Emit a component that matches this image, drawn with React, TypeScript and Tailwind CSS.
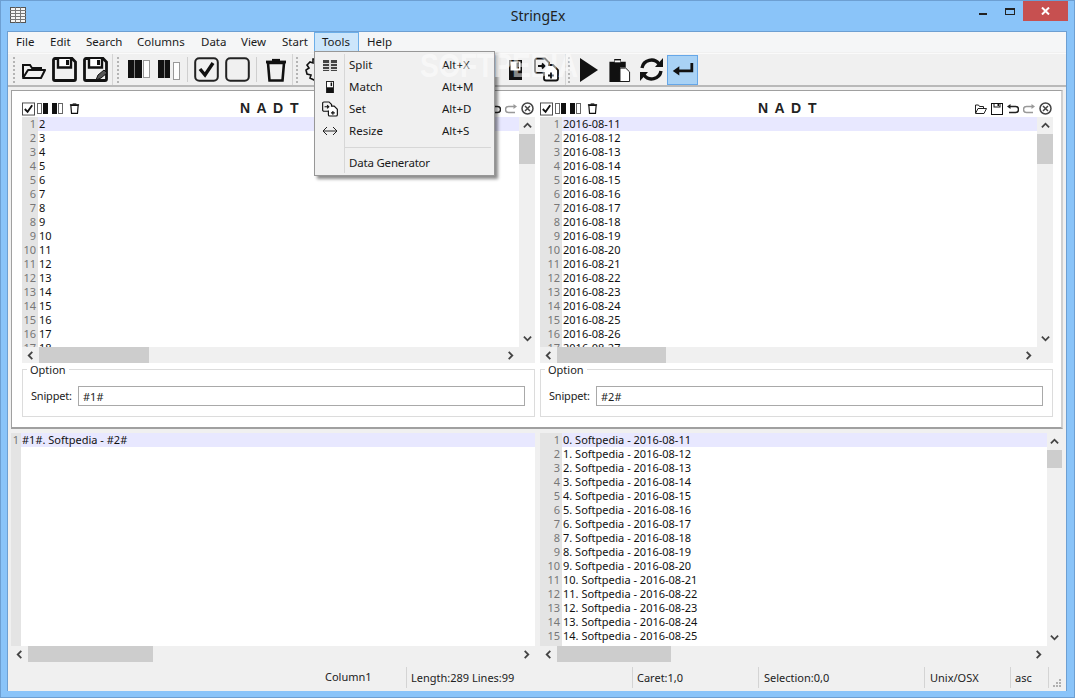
import type { ReactNode } from "react";

const uiFont = "font-['Noto_Sans',sans-serif]";

const menus: [string, string][] = [
  ["File", "w-[34px]"],
  ["Edit", "w-[36px]"],
  ["Search", "w-[51px]"],
  ["Columns", "w-[64px]"],
  ["Data", "w-[40px]"],
  ["View", "w-[41px]"],
  ["Start", "w-[40px]"],
  ["Tools", "w-[45px]"],
  ["Help", "w-[44px]"],
];

function pad(n: number) {
  return n < 10 ? "0" + n : "" + n;
}

function dateAt(i: number) {
  return i < 21 ? `2016-08-${i + 11}` : `2016-09-${pad(i - 20)}`;
}

const numberLines = Array.from({ length: 18 }, (_, i) => String(i + 2));
const dateLines = Array.from({ length: 18 }, (_, i) => dateAt(i));
const resultLines = Array.from({ length: 16 }, (_, i) => `${i}. Softpedia - ${dateAt(i)}`);

function Grip({ className = "" }: { className?: string }) {
  return <div className={`w-[2px] h-[26px] border-l-2 border-dotted border-[#b4b4b4] ${className}`} />;
}

function Sep({ className = "" }: { className?: string }) {
  return <div className={`w-px h-[25px] bg-[#cfcfcf] ${className}`} />;
}

function Divider({ className = "" }: { className?: string }) {
  return <div className={`w-px h-[31px] bg-[#d4d4d4] ${className}`} />;
}

function OpenIcon() {
  return (
    <svg width="26" height="24" viewBox="0 0 26 24" fill="none" stroke="#111" strokeWidth="2">
      <path d="M3 19V7h7l2 3h9v3" />
      <path d="M3 20h18l4-8H8L3 20z" strokeLinejoin="round" />
    </svg>
  );
}

function SaveIcon({ pen }: { pen?: boolean }) {
  return (
    <svg width="25" height="25" viewBox="0 0 25 25" fill="none">
      <path d="M3 1.500h17l3.500 3.500v17a1.500 1.500 0 0 1-1.500 1.500H3A1.500 1.500 0 0 1 1.500 22V3A1.500 1.500 0 0 1 3 1.500z" stroke="#111" strokeWidth="2.800" />
      <path d="M6 2v8.500h13V2" fill="#fff" stroke="#111" strokeWidth="2.400" />
      <rect x="14" y="3" width="3" height="5" fill="#111" />
      {pen && <path d="M13 23l2-5 6-5 3 3-6 5z" fill="#555" stroke="#111" strokeWidth="1" />}
    </svg>
  );
}

function ColumnsIcon({ second }: { second?: boolean }) {
  return (
    <svg width="22" height="20" viewBox="0 0 22 20">
      {second ? (
        <>
          <rect x="0" y="0" width="6" height="18" fill="#111" />
          <rect x="6.500" y="0" width="5.500" height="18" fill="#111" />
          <rect x="15.500" y="2.500" width="6" height="17" fill="#fff" stroke="#999" />
        </>
      ) : (
        <>
          <rect x="0" y="0" width="6.500" height="18" fill="#111" />
          <rect x="7" y="0" width="7" height="18" fill="#111" />
          <rect x="15.500" y="0.500" width="6" height="17" fill="#fff" stroke="#999" />
        </>
      )}
    </svg>
  );
}

function BoxIcon({ checked }: { checked?: boolean }) {
  return (
    <svg width="25" height="25" viewBox="0 0 25 25" fill="none">
      <rect x="1.200" y="1.200" width="22.600" height="22.600" rx="4" stroke="#222" strokeWidth="2" />
      {checked && <path d="M6 12l5 6 8-12" stroke="#111" strokeWidth="3.400" />}
    </svg>
  );
}

function TrashIcon({ size = 24 }: { size?: number }) {
  return (
    <svg width={size} height={size} viewBox="0 0 24 24" fill="none" stroke="#111">
      <path d="M4 5l1.500 17.500h13L20 5z" strokeWidth="2.600" />
      <path d="M2 4h20" strokeWidth="2.800" />
      <path d="M8 2h8" strokeWidth="2.200" />
    </svg>
  );
}

function GearIcon() {
  return (
    <svg width="24" height="26" viewBox="0 0 24 26" fill="none" stroke="#111" strokeWidth="1.600">
      <path d="M9 2h5l1 3 3-1 3 4-2 3 3 2-1 5-3 0 0 3-4 2-2-2-2 2-4-2 1-3-4-1-1-4 3-2-2-3 3-3 3 1z" />
    </svg>
  );
}

function MatchIcon({ w, h }: { w: number; h: number }) {
  return (
    <svg width={w} height={h} viewBox="0 0 13 20">
      <rect x="0" y="0" width="13" height="20" fill="#111" />
      <rect x="1.500" y="1.500" width="10" height="9" fill="#fff" />
      <rect x="7.500" y="2.500" width="2.500" height="6" fill="#111" />
    </svg>
  );
}

function SetIcon({ size = 25 }: { size?: number }) {
  return (
    <svg width={size} height={size} viewBox="0 0 25 25" fill="none" stroke="#111" strokeWidth="1.800">
      <path d="M3 1.500h8l4 4V16H3a2 2 0 0 1-2-2V3.500a2 2 0 0 1 2-2z" />
      <path d="M14 8h5l5 5v8.500a2 2 0 0 1-2 2H12a2 2 0 0 1-2-2V15" fill="#fff" />
      <path d="M4 9h6M8 6.500l2.500 2.500L8 11.500M14 18.500h6M17 15.500v6" />
    </svg>
  );
}

function PlayIcon() {
  return (
    <svg width="18" height="24" viewBox="0 0 18 24">
      <path d="M0 0l18 12L0 24z" fill="#111" />
    </svg>
  );
}

function PasteIcon() {
  return (
    <svg width="23" height="24" viewBox="0 0 23 25">
      <path d="M1 4h5V1h7v3h5v6h-6v15H1z" fill="#111" />
      <rect x="6.500" y="2.500" width="6" height="2" fill="#fff" />
      <path d="M12 10.500h6l4 4V24.500H12z" fill="#fff" stroke="#111" />
    </svg>
  );
}

function RefreshIcon() {
  return (
    <svg width="25" height="25" viewBox="0 0 25 25" fill="none" stroke="#111" strokeWidth="3.400">
      <path d="M3 11a9.500 9.500 0 0 1 17-4" />
      <path d="M22 14a9.500 9.500 0 0 1-17 4" />
      <path d="M24 1v9h-8z" fill="#111" stroke="none" />
      <path d="M1 24v-9h8z" fill="#111" stroke="none" />
    </svg>
  );
}

function EnterIcon() {
  return (
    <svg width="22" height="13" viewBox="0 0 22 14" fill="none">
      <path d="M20.500 0v8.500H5" stroke="#111" strokeWidth="3" />
      <path d="M0 8.500l7-5v10z" fill="#111" />
    </svg>
  );
}

function SplitIcon() {
  return (
    <svg width="14" height="11" viewBox="0 0 14 11">
      <rect width="14" height="11" fill="#444" />
      <path d="M0 3.500h14M0 6.500h14M0 9.500h14M6.500 0v11M7.500 0v11" stroke="#ddd" />
    </svg>
  );
}

function SmallSplit({ right }: { right?: boolean }) {
  return (
    <svg width="11" height="11" viewBox="0 0 11 11">
      {right ? (
        <>
          <rect x="0" y="0" width="5" height="11" fill="#111" />
          <rect x="6.500" y="0.500" width="4" height="10" fill="#fff" stroke="#666" />
        </>
      ) : (
        <>
          <rect x="0.500" y="0.500" width="4" height="10" fill="#fff" stroke="#666" />
          <rect x="6" y="0" width="5" height="11" fill="#111" />
        </>
      )}
    </svg>
  );
}

function SmallCheck() {
  return (
    <svg width="14" height="14" viewBox="0 0 14 14" fill="none">
      <rect x="0.500" y="0.500" width="13" height="13" fill="#fff" stroke="#444" />
      <path d="M3 7l3 3 5-7" stroke="#111" strokeWidth="2" />
    </svg>
  );
}

function SmallOpen() {
  return (
    <svg width="12" height="10" viewBox="0 0 12 10" fill="none" stroke="#222">
      <path d="M0.500 9V1h3l1 1.500h4V4M0.500 9.500h8.500l2.500-5H3z" />
    </svg>
  );
}

function SmallSave() {
  return (
    <svg width="12" height="12" viewBox="0 0 12 12" fill="none" stroke="#111">
      <rect x="0.500" y="0.500" width="11" height="11" />
      <rect x="3" y="0.500" width="6" height="3.500" fill="#fff" />
      <rect x="6.500" y="1" width="1.500" height="2" fill="#111" stroke="none" />
    </svg>
  );
}

function SmallUndo({ redo }: { redo?: boolean }) {
  return (
    <svg width="12" height="10" viewBox="0 0 12 10" fill="none" className={redo ? "-scale-x-100" : ""}>
      <path d="M2 2.500h6.500a3 3 0 0 1 0 6H2" stroke={redo ? "#999" : "#222"} strokeWidth="1.500" />
      <path d="M3.500 0v5L0 2.500z" fill={redo ? "#999" : "#222"} />
    </svg>
  );
}

function SmallClose() {
  return (
    <svg width="13" height="13" viewBox="0 0 13 13" fill="none" stroke="#444">
      <circle cx="6.500" cy="6.500" r="5.500" strokeWidth="1.500" />
      <path d="M4 4l5 5M9 4l-5 5" strokeWidth="1.500" />
    </svg>
  );
}

function Chevron({ dir }: { dir: "up" | "down" | "left" | "right" }) {
  const d = {
    up: "M1 6l4-4 4 4",
    down: "M1 2l4 4 4-4",
    left: "M6 1L2 5l4 4",
    right: "M2 1l4 4-4 4",
  }[dir];
  return (
    <svg width="9" height="9" viewBox={dir === "up" || dir === "down" ? "0 0 10 8" : "0 0 8 10"} fill="none">
      <path d={d} stroke="#444" strokeWidth="2" />
    </svg>
  );
}

function VScroll({ width, thumb }: { width: string; thumb: string }) {
  return (
    <div className={`${width} shrink-0 bg-[#f0f0f0] flex flex-col items-center`}>
      <div className="h-[17px] flex items-center justify-center">
        <Chevron dir="up" />
      </div>
      <div className={`w-full bg-[#cdcdcd] ${thumb}`} />
      <div className="flex-1" />
      <div className="h-[17px] flex items-center justify-center">
        <Chevron dir="down" />
      </div>
    </div>
  );
}

function HScroll({ thumb, offset, corner = "" }: { thumb: string; offset: string; corner?: string }) {
  return (
    <div className="h-[16px] bg-[#f0f0f0] flex items-center">
      <div className={`${offset} shrink-0 flex items-center justify-center`}>
        <Chevron dir="left" />
      </div>
      <div className={`h-full bg-[#cdcdcd] ${thumb}`} />
      <div className="flex-1" />
      <div className="w-[17px] flex items-center justify-center">
        <Chevron dir="right" />
      </div>
      <div className={corner} />
    </div>
  );
}

function Editor({
  lines,
  gutter,
  scrollbar,
  lineClass,
}: {
  lines: string[];
  gutter: string;
  scrollbar?: ReactNode;
  lineClass: string;
}) {
  return (
    <div className={`flex bg-white overflow-hidden ${lineClass}`}>
      <div className="flex-1 min-w-0 overflow-hidden flex flex-col">
        {lines.map((line, i) => (
          <div key={i} className={`flex shrink-0 h-[14px] leading-[14px] text-[11px] text-[#111] ${i === 0 ? "bg-[#e8e8ff]" : ""}`}>
            <div className={`${gutter} shrink-0 bg-[#e4e4e4] text-right pr-[2px] text-[#777]`}>{i + 1}</div>
            <div className="pl-[1px] whitespace-nowrap">{line}</div>
          </div>
        ))}
        <div className="flex-1 flex">
          <div className={`${gutter} bg-[#e4e4e4]`} />
        </div>
      </div>
      {scrollbar}
    </div>
  );
}

function Option({ snippet }: { snippet: string }) {
  return (
    <div className="relative mt-[6px] h-[48px] border border-[#dcdcdc] flex items-center pl-[8px] pr-[9px] pt-[5px]">
      <span className="absolute -top-[7px] left-[4px] bg-white px-[3px] text-[11px] leading-[14px] text-[#222]">Option</span>
      <span className="text-[11px] leading-[22px] tracking-[-0.2px] text-[#222] w-[47px] shrink-0">Snippet:</span>
      <div className="flex-1 h-[20px] border border-[#a9a9a9] bg-white pl-[4px] text-[11px] leading-[19px] text-[#222]">{snippet}</div>
    </div>
  );
}

function PaneHeader({ tools }: { tools: ReactNode }) {
  return (
    <div className="h-[17px] flex items-center pr-[1px]">
      <div className="flex items-center gap-[5px] w-[58px]">
        <SmallCheck />
        <div className="-ml-[3px] flex items-center gap-[4px]">
          <SmallSplit />
          <SmallSplit right />
        </div>
        <span className="ml-[1px] flex">
          <TrashIcon size={11} />
        </span>
      </div>
      <div className="flex-1 pl-[160px] font-['Liberation_Sans',sans-serif] font-bold text-[14px] tracking-[1.500px] text-[#222] leading-[17px]">
        N A D T
      </div>
      <div className="flex items-center gap-[4px]">{tools}</div>
    </div>
  );
}

function MenuRow({
  icon,
  label,
  shortcut,
  labelClass = "",
}: {
  icon: ReactNode;
  label: string;
  shortcut?: string;
  labelClass?: string;
}) {
  return (
    <div className="h-[22px] flex items-center">
      <div className="w-[29px] flex justify-center">{icon}</div>
      <div className="w-[5px]" />
      <div className={`w-[93px] ${labelClass}`}>{label}</div>
      <div>{shortcut}</div>
    </div>
  );
}

export default function App() {
  return (
    <div className={`relative w-[1075px] h-[698px] overflow-hidden bg-[#8ac4f9] border border-[#6d9fd2] flex flex-col text-[#1a1a1a] ${uiFont}`}>
      {/* title bar */}
      <div className="h-[30px] flex items-start shrink-0">
        <div className="w-[7px]" />
        <div className="mt-[6px] ml-[2px]">
          <svg width="16" height="16" viewBox="0 0 16 16">
            <rect x="0.500" y="0.500" width="15" height="15" fill="#f4f4f4" stroke="#555" />
            <path d="M0 3.500h16M0 6.500h16M0 9.500h16M0 12.500h16M5.500 0v16M10.500 0v16" stroke="#777" />
          </svg>
        </div>
        <div className="flex-1 text-center text-[14px] leading-[30px] text-[#222] pl-[71px]">StringEx</div>
        <div className="w-[8px] h-[2px] bg-[#222] mt-[12px] mr-[18px]" />
        <div className="w-[10px] h-[7px] border border-t-2 border-[#222] mt-[7px] mr-[8px]" />
        <div className="w-[45px] h-[20px] bg-[#c75050] mr-[6px] flex items-center justify-center text-white">
          <svg width="9" height="8" viewBox="0 0 9 8">
            <path d="M1 0.500l7 7M8 0.500l-7 7" stroke="#fff" strokeWidth="2" />
          </svg>
        </div>
      </div>

      {/* client area */}
      <div className="mx-[6px] w-[1060px] h-[660px] border border-[#6d9fd2] border-b-0 bg-[#f0f0f0] flex flex-col">
        {/* menu bar */}
        <div className="h-[20px] bg-[#f5f6f7] flex text-[11.500px] leading-[19px] shrink-0">
          {menus.map(([name, w]) => (
            <div
              key={name}
              className={`${w} ${name === "Tools" ? "bg-[#cce6fb] border border-[#6caee8] leading-[17px] pl-[7px]" : "pl-[8px]"}`}
            >
              {name}
            </div>
          ))}
        </div>

        {/* toolbar */}
        <div className="h-[34px] mt-px border-t border-[#fafafa] border-b-2 border-b-[#b9b9b9] flex items-center pl-[5px] shrink-0">
          <Grip />
          <div className="ml-[5px]"><OpenIcon /></div>
          <div className="ml-[6px]"><SaveIcon /></div>
          <div className="ml-[6px]"><SaveIcon pen /></div>
          <Divider className="ml-[4px]" />
          <Grip className="ml-[4px]" />
          <div className="ml-[9px]"><ColumnsIcon /></div>
          <div className="ml-[8px]"><ColumnsIcon second /></div>
          <Sep className="ml-[7px]" />
          <div className="ml-[6px]"><BoxIcon checked /></div>
          <div className="ml-[6px]"><BoxIcon /></div>
          <Sep className="ml-[6px]" />
          <div className="ml-[7px]"><TrashIcon size={24} /></div>
          <Divider className="ml-[4px]" />
          <Grip className="ml-[3px]" />
          <div className="ml-[6px]"><GearIcon /></div>
          <div className="ml-[181px]"><MatchIcon w={13} h={20} /></div>
          <div className="ml-[12px]"><SetIcon /></div>
          <Divider className="ml-[6px]" />
          <Grip className="ml-[2px]" />
          <div className="ml-[10px]"><PlayIcon /></div>
          <div className="ml-[10px]"><PasteIcon /></div>
          <div className="ml-[8px]"><RefreshIcon /></div>
          <div className="ml-[3px] w-[31px] h-[30px] bg-[#a9d2f5] border border-[#66a7e8] flex items-center justify-center">
            <EnterIcon />
          </div>
        </div>

        {/* top frame */}
        <div className="mt-[3px] ml-[3px] w-[1052px] h-[339px] border border-[#a0a0a0] border-r-2 border-b-2 border-r-[#d0d0d0] bg-white flex gap-[5px] pl-[10px] pt-[9px] shrink-0">
          <div className="w-[513px] shrink-0">
            <PaneHeader
              tools={
                <>
                  <SmallUndo />
                  <SmallUndo redo />
                  <SmallClose />
                </>
              }
            />
            <Editor
              lines={numberLines}
              gutter="w-[16px]"
              lineClass="h-[230px]"
              scrollbar={<VScroll width="w-[16px]" thumb="h-[30px]" />}
            />
            <HScroll offset="w-[17px]" thumb="w-[110px]" corner="w-[16px]" />
            <Option snippet="#1#" />
          </div>
          <div className="w-[513px] shrink-0">
            <PaneHeader
              tools={
                <>
                  <SmallOpen />
                  <SmallSave />
                  <SmallUndo />
                  <SmallUndo redo />
                  <SmallClose />
                </>
              }
            />
            <Editor
              lines={dateLines}
              gutter="w-[22px]"
              lineClass="h-[230px]"
              scrollbar={<VScroll width="w-[16px]" thumb="h-[30px]" />}
            />
            <HScroll offset="w-[17px]" thumb="w-[109px]" corner="w-[16px]" />
            <Option snippet="#2#" />
          </div>
        </div>

        {/* bottom editors */}
        <div className="flex mt-[4px] ml-[3px] gap-[5px] shrink-0">
          <div className="w-[524px]">
            <Editor lines={["#1#. Softpedia - #2#"]} gutter="w-[10px]" lineClass="h-[213px]" />
            <HScroll offset="w-[17px]" thumb="w-[125px]" />
          </div>
          <div className="w-[522px]">
            <Editor
              lines={resultLines}
              gutter="w-[22px]"
              lineClass="h-[213px]"
              scrollbar={<VScroll width="w-[15px]" thumb="h-[18px]" />}
            />
            <HScroll offset="w-[17px]" thumb="w-[114px]" corner="w-[15px]" />
          </div>
        </div>

        {/* status bar */}
        <div className="mt-[3px] h-[25px] flex items-center text-[11px] text-[#222] shrink-0">
          <div className="w-[315px]" />
          <div className="w-[83px] pl-[2px]">Column1</div>
          <div className="w-[226px] h-[21px] border-l border-[#d4d4d4] pl-[4px] leading-[21px]">Length:289 Lines:99</div>
          <div className="w-[126px] h-[21px] border-l border-[#d4d4d4] pl-[4px] leading-[21px]">Caret:1,0</div>
          <div className="w-[166px] h-[21px] border-l border-[#d4d4d4] pl-[5px] leading-[21px]">Selection:0,0</div>
          <div className="w-[86px] h-[21px] border-l border-[#d4d4d4] pl-[5px] leading-[21px]">Unix/OSX</div>
          <div className="w-[38px] h-[21px] border-l border-[#d4d4d4] pl-[4px] leading-[21px]">asc</div>
          <div className="h-[21px] border-l border-[#d4d4d4]" />
          <svg width="8" height="8" viewBox="0 0 8 8" className="ml-[4px] mt-[10px]" fill="#b0b0b0">
            <rect x="6" y="0" width="2" height="2" />
            <rect x="3" y="3" width="2" height="2" />
            <rect x="6" y="3" width="2" height="2" />
            <rect x="0" y="6" width="2" height="2" />
            <rect x="3" y="6" width="2" height="2" />
            <rect x="6" y="6" width="2" height="2" />
          </svg>
        </div>
      </div>

      {/* tools menu */}
      <div className="absolute left-[313px] top-[50px] w-[181px] h-[125px] bg-[#f0f0f0] border border-[#979797] shadow-[3px_3px_3px_rgba(0,0,0,0.45)] pt-[2px] text-[11.500px] text-[#1a1a1a]">
        <div className="absolute left-[29px] top-[2px] bottom-[2px] w-px bg-[#d7d7d7]" />
        <MenuRow icon={<SplitIcon />} label="Split" shortcut="Alt+X" />
        <MenuRow icon={<MatchIcon w={8} h={12} />} label="Match" shortcut="Alt+M" />
        <MenuRow icon={<SetIcon size={16} />} label="Set" shortcut="Alt+D" />
        <MenuRow
          icon={
            <svg width="16" height="10" viewBox="0 0 16 10" fill="none" stroke="#222">
              <path d="M1 5h14M5 1L1 5l4 4M11 1l4 4-4 4" />
            </svg>
          }
          label="Resize"
          shortcut="Alt+S"
        />
        <div className="ml-[30px] mr-[3px] mt-[5px] mb-[4px] h-px bg-[#d7d7d7]" />
        <MenuRow icon={null} label="Data Generator" labelClass="whitespace-nowrap tracking-[-0.2px]" />
      </div>

      {/* watermark */}
      <div className="absolute left-[419px] top-[44px] origin-left scale-x-[0.83] pointer-events-none font-['Liberation_Sans',sans-serif] font-bold text-[34px] leading-[40px] tracking-[-0.500px] text-white/50">
        SOFTPEDIA
      </div>
    </div>
  );
}
